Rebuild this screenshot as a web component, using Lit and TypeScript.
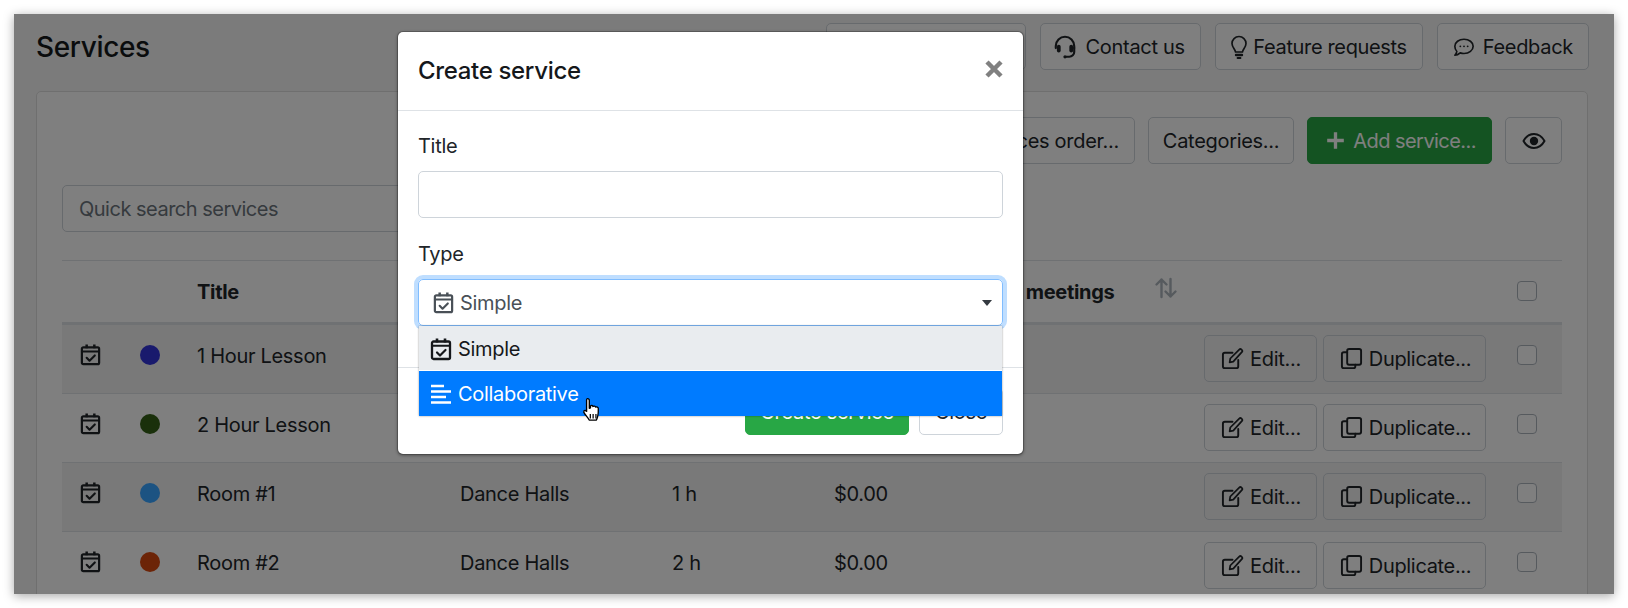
import { LitElement, html, css, svg } from "lit";
import { customElement } from "lit/decorators.js";

const icon = (size: number, body: unknown, cls = "") =>
  html`<svg class="ico ${cls}" width=${size} height=${size} viewBox="0 0 24 24" fill="none" stroke="currentColor" stroke-width="2" stroke-linecap="round" stroke-linejoin="round">${body}</svg>`;

const calendar = svg`<path d="M4.500 4.500h15A1.500 1.500 0 0 1 21 6v14.500a1.500 1.500 0 0 1-1.500 1.500h-15A1.500 1.500 0 0 1 3 20.500V6a1.500 1.500 0 0 1 1.500-1.500z" stroke-width="2.300"/><path d="M3 8.800h18" stroke-width="2"/><path d="M8 1.500v4M16 1.500v4" stroke-width="2.600" stroke-linecap="butt"/><path d="M8 15.500l3 3 5.500-5.500" stroke-width="2.200"/>`;
const edit = svg`<path d="M18 13.500V20a2 2 0 0 1-2 2H4a2 2 0 0 1-2-2V8a2 2 0 0 1 2-2h8"/><path d="M9 16l.7-4L19 2.700a1.700 1.700 0 0 1 2.400 0l.3.300a1.700 1.700 0 0 1 0 2.400L12.800 15.300z" stroke-width="1.800"/>`;
const clone = svg`<rect x="7.500" y="2" width="14.500" height="16.500" rx="2"/><path d="M7.500 5.500H4a2 2 0 0 0-2 2V20a2 2 0 0 0 2 2h10a2 2 0 0 0 2-2v-1.500"/>`;
const headset = svg`<path d="M3.500 13v-2a8.500 8.500 0 0 1 17 0v2" stroke-width="2"/><rect x="4.500" y="10" width="3.500" height="7" rx="1.700" fill="currentColor" stroke="none"/><rect x="16" y="10" width="3.500" height="7" rx="1.700" fill="currentColor" stroke="none"/><path d="M20.500 13v3.500a4.500 4.500 0 0 1-4.500 4.500h-3" stroke-width="2"/><circle cx="12" cy="21" r="1.500" fill="currentColor" stroke="none"/>`;
const bulb = svg`<path d="M8.500 17c0-2.500-3.500-4.500-3.500-8.500a7 7 0 0 1 14 0c0 4-3.500 6-3.500 8.500z" stroke-width="1.700"/><path d="M9 20h6" stroke-width="2.400"/><path d="M10.500 23h3" stroke-width="1.800"/>`;
const comment = svg`<path d="M12 3.500c5.500 0 10 3.400 10 7.800s-4.500 7.800-10 7.800c-1.500 0-2.900-.3-4.100-.7C6.700 19.500 4.500 21 2 21c1.200-1.100 2-2.800 2.200-4.100C2.800 15.400 2 13.500 2 11.300 2 6.900 6.500 3.500 12 3.500z" stroke-width="1.800"/><circle cx="8" cy="11.300" r="1" fill="currentColor" stroke="none"/><circle cx="12" cy="11.300" r="1" fill="currentColor" stroke="none"/><circle cx="16" cy="11.300" r="1" fill="currentColor" stroke="none"/>`;
const eye = svg`<path d="M1.500 12C4 7.500 7.700 5 12 5s8 2.500 10.500 7c-2.500 4.500-6.200 7-10.500 7S4 16.500 1.500 12z" stroke-width="2"/><circle cx="12" cy="12" r="4.200" fill="currentColor" stroke="none"/>`;
const plus = svg`<path d="M12 1.500v21M1.500 12h21" stroke-width="4.200" stroke-linecap="butt"/>`;
const sort = svg`<path d="M7.500 21V3.500M2.500 8.500l5-5 5 5" stroke-width="2.400"/><path d="M16.500 3v17.500M11.500 15.500l5 5 5-5" stroke-width="2.400"/>`;
const bars = svg`<path d="M2 4h13M2 9.500h20M2 15h15M2 20.500h20" stroke-width="2.600" stroke-linecap="butt"/>`;

// dot colours are the final on-screen ones, the dots sit above the backdrop
const services = [
  { title: "1 Hour Lesson", color: "#191a6d", category: "Dance Halls", duration: "1 h" },
  { title: "2 Hour Lesson", color: "#1a300b", category: "Dance Halls", duration: "2 h" },
  { title: "Room #1", color: "#1c5382", category: "Dance Halls", duration: "1 h" },
  { title: "Room #2", color: "#6c2407", category: "Dance Halls", duration: "2 h" },
];

@customElement("app-root")
export class AppRoot extends LitElement {
  static styles = css`
    :host {
      display: block;
      width: 1628px;
      height: 608px;
      padding: 14px;
      box-sizing: border-box;
      background: #fff;
      font-family: Inter, "Liberation Sans", sans-serif;
      font-size: 20px;
      line-height: 30px;
      letter-spacing: -0.3px;
      color: #212529;
    }
    * { box-sizing: border-box; }
    .ico { display: block; flex: none; }
    .window {
      position: relative;
      width: 1600px;
      height: 580px;
      overflow: hidden;
      background: #f6f6f6;
      padding: 9px 26px 0 22px;
      box-shadow: 0 2px 10px rgba(0, 0, 0, 0.35);
    }
    .topbar { display: flex; align-items: flex-start; gap: 14px; height: 47px; margin-right: -1px; }
    h1 {
      margin: 0 auto 0 0;
      font-size: 28px;
      line-height: 48px;
      font-weight: 500;
      letter-spacing: -0.35px;
      color: #15181b;
    }
    .btn {
      display: flex;
      align-items: center;
      justify-content: center;
      gap: 8px;
      height: 47px;
      padding: 0 15px;
      background: #fff;
      border: 1px solid #ced4da;
      border-radius: 5px;
      white-space: nowrap;
      color: #212529;
    }
    .btn.tool { background: transparent; border-color: #ced4da; }
    .btn.green { background: #28a745; border-color: #28a745; color: #fff; }
    .btn.add { padding: 0 15px 0 18px; letter-spacing: -0.55px; }
    .btn.eye { padding: 0 15.5px; }
    .btn.feature { letter-spacing: -0.35px; }
    .btn .bulb { margin: 0 -5.5px 0 -4px; }
    .btn .headset { margin-left: -4px; }
    .btn.cats { padding: 0 14px; }
    .card {
      margin-top: 21px;
      height: 520px;
      padding: 25px 25px 0;
      background: #fff;
      border: 1px solid #dfdfdf;
      border-radius: 5px;
    }
    .toolbar { display: flex; justify-content: flex-end; gap: 13px; }
    .search {
      margin-top: 21px;
      width: 380px;
      height: 47px;
      padding: 0 16px;
      display: flex;
      align-items: center;
      border: 1px solid #ced4da;
      border-radius: 5px;
      color: #6c757d;
      letter-spacing: -0.5px;
    }
    .thead, .row {
      display: grid;
      grid-template-columns: 77px 58px 263px 212px 162px 120px 250px 282px 77px;
    }
    .thead {
      margin-top: 28px;
      height: 65px;
      border-top: 1px solid #dee2e6;
      border-bottom: 3px solid #dee2e6;
      font-weight: 700;
      align-items: start;
      padding-top: 16px;
    }
    .meet { display: flex; align-items: center; gap: 40px; margin-left: 6px; }
    .sort { color: #adb5bd; margin-top: -8px; }
    .row {
      height: 69px;
      border-bottom: 1px solid #dee2e6;
      padding-top: 16px;
      align-items: start;
    }
    .row:nth-child(even) { background: #f2f2f2; }
    .row .cal { margin: 2px 0 0 17px; }
    .dot {
      position: relative;
      z-index: 1;
      width: 20px;
      height: 20px;
      border-radius: 50%;
      margin: 4px 0 0 1px;
    }
    .actions { display: flex; gap: 6px; margin-top: -6px; grid-column: 8; }
    .actions .btn { background: transparent; padding: 0 15px 0 16px; gap: 6px; }
    .actions .btn.dup { padding-right: 14px; letter-spacing: -0.33px; }
    .check, .hcheck {
      width: 20px;
      height: 20px;
      margin: 4px 0 0 31px;
      border: 1px solid #adb5bd;
      border-radius: 4px;
      background: #fff;
      grid-column: 9;
    }
    .backdrop {
      position: absolute;
      inset: 0;
      background: rgba(0, 0, 0, 0.5);
      padding: 17px 0 0 383px;
    }
    .modal {
      width: 627px;
      height: 424px;
      background: #fff;
      border: 1px solid rgba(0, 0, 0, 0.2);
      border-radius: 6px;
      background-clip: padding-box;
      box-shadow: 0 1px 3px rgba(0, 0, 0, 0.3);
    }
    .mhead {
      height: 79px;
      padding: 0 20px;
      display: flex;
      align-items: center;
      justify-content: space-between;
      border-bottom: 1px solid #dee2e6;
    }
    h5 { margin: 0; font-size: 24px; line-height: 36px; font-weight: 500; letter-spacing: -0.33px; color: #15181b; }
    .close { color: #808080; margin-top: -4px; }
    .mbody { padding: 20px 20px 0; height: 256px; position: relative; }
    label { display: block; height: 30px; margin-bottom: 10px; }
    .input {
      height: 47px;
      margin-bottom: 21px;
      border: 1px solid #ced4da;
      border-radius: 5px;
    }
    .select {
      position: relative;
      height: 47px;
      padding: 0 14px 0 13px;
      display: flex;
      align-items: center;
      gap: 5px;
      color: #495057;
      border: 1px solid #80bdff;
      border-radius: 5px;
      box-shadow: 0 0 0 4px #bfdeff;
    }
    .caret {
      margin-left: auto;
      margin-right: -4px;
      border: 5px solid transparent;
      border-top: 6px solid #343a40;
      border-bottom: 0;
    }
    .menu {
      position: absolute;
      top: 46px;
      left: 0;
      right: 0;
      z-index: 2;
      background: #fff;
      color: #16181b;
      box-shadow: 0 0 2px rgba(0, 0, 0, 0.4);
    }
    .opt { height: 45px; padding: 0 10px; display: flex; align-items: center; gap: 5px; }
    .opt + .opt { margin-top: 1px; }
    .opt.on { background: #e9ecef; height: 44px; padding-top: 2px; }
    .opt.hover { background: #007bff; color: #fff; }
    .hand { position: absolute; left: 161px; top: 71px; z-index: 3; display: block; }
    .mfoot {
      height: 88px;
      padding: 20px;
      display: flex;
      justify-content: flex-end;
      gap: 10px;
      border-top: 1px solid #dee2e6;
    }
    .mfoot .btn { width: 164px; }
    .mfoot .btn.plain { width: 84px; }
  `;

  render() {
    return html`<div class="window">
      <div class="topbar">
        <h1>Services</h1>
        <div class="btn">${icon(20, bulb)}Documentation</div>
        <div class="btn">${icon(26, headset, "headset")}Contact us</div>
        <div class="btn feature">${icon(24, bulb, "bulb")}Feature requests</div>
        <div class="btn">${icon(22, comment)}Feedback</div>
      </div>
      <div class="card">
        <div class="toolbar">
          <div class="btn tool">Services order...</div>
          <div class="btn tool cats">Categories...</div>
          <div class="btn green add">${icon(19, plus)}Add service...</div>
          <div class="btn tool eye">${icon(24, eye)}</div>
        </div>
        <div class="search">Quick search services</div>
        <div class="thead">
          <span></span><span></span>
          <span>Title</span><span>Category</span><span>Duration</span><span>Price</span>
          <div class="meet"><span>Online meetings</span><span class="sort">${icon(24, sort)}</span></div>
          <div class="hcheck"></div>
        </div>
        ${services.map(
          (s) => html`<div class="row">
            <div class="cal">${icon(23, calendar)}</div>
            <div class="dot" style="background:${s.color}"></div>
            <span>${s.title}</span>
            <span>${s.category}</span>
            <span>${s.duration}</span>
            <span>$0.00</span>
            <div class="actions">
              <div class="btn">${icon(23, edit)}Edit...</div>
              <div class="btn dup">${icon(23, clone)}Duplicate...</div>
            </div>
            <div class="check"></div>
          </div>`
        )}
      </div>
      <div class="backdrop">
        <div class="modal">
          <div class="mhead">
            <h5>Create service</h5>
            <svg class="ico close" width="18" height="18" viewBox="0 0 18 18" fill="none" stroke="currentColor" stroke-width="4.500"><path d="M2 2l14 14M16 2L2 16" /></svg>
          </div>
          <div class="mbody">
            <label>Title</label>
            <div class="input"></div>
            <label>Type</label>
            <div class="select">
              ${icon(23, calendar)}<span>Simple</span><i class="caret"></i>
              <div class="menu">
                <div class="opt on">${icon(24, calendar)}Simple</div>
                <div class="opt hover">${icon(24, bars)}Collaborative</div>
                <svg class="hand" width="24" height="27" viewBox="0 0 18 24">
                  <path d="M5 1.500c1 0 1.600.7 1.600 1.700V10l1-.3V8c.8-.8 2 -.6 2.300.4.900-.6 2-.3 2.300.6 1-.5 2.300 0 2.400 1.200.1 2.500 0 5-.6 7.300-.3 1.300-.7 2.300-1.200 3H6.500c-.8-1.600-2.300-3.300-4-5.600-.8-1-1.200-1.900-.6-2.600.6-.6 1.600-.3 2.300.5V3.200c0-1 .3-1.700.8-1.700z" fill="#fff" stroke="#000" stroke-width="1.200" stroke-linejoin="round"/>
                  <path d="M7.500 15v4M10 15v4M12.500 15v4" stroke="#000" stroke-width="1.100"/>
                </svg>
              </div>
            </div>
          </div>
          <div class="mfoot">
            <div class="btn green">Create service</div>
            <div class="btn plain">Close</div>
          </div>
        </div>
      </div>
    </div>`;
  }
}
